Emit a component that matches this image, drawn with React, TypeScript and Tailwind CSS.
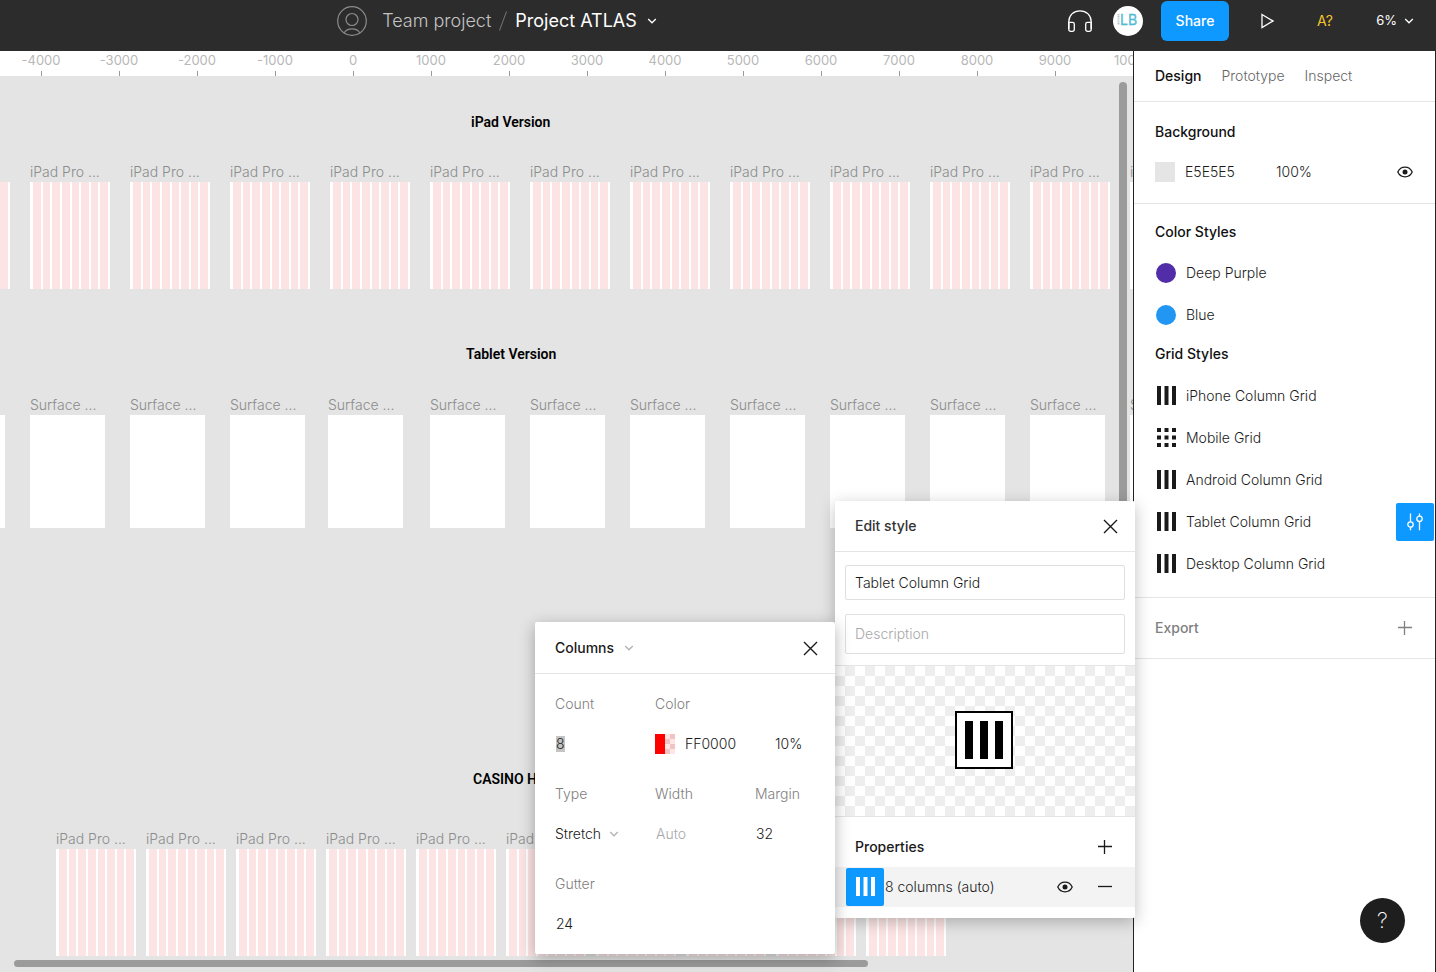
import { useState } from "react";
import type { ReactNode } from "react";

const RULER = [-4000, -3000, -2000, -1000, 0, 1000, 2000, 3000, 4000, 5000, 6000, 7000, 8000, 9000, 10000];

const IPAD_FRAMES = [-70, 30, 130, 230, 330, 430, 530, 630, 730, 830, 930, 1030, 1130];
const SURFACE_FRAMES = [-70, 30, 130, 230, 328, 430, 530, 630, 730, 830, 930, 1030, 1130];
const CASINO_FRAMES = [56, 146, 236, 326, 416, 506];
const CASINO_UNNAMED_FRAMES = [596, 686, 776, 866];

const COLOR_STYLES = [
  { name: "Deep Purple", swatch: "bg-[#512da8]" },
  { name: "Blue", swatch: "bg-[#2196f3]" },
];

const GRID_STYLES = [
  { name: "iPhone Column Grid", kind: "columns" },
  { name: "Mobile Grid", kind: "dots" },
  { name: "Android Column Grid", kind: "columns" },
  { name: "Tablet Column Grid", kind: "columns", active: true },
  { name: "Desktop Column Grid", kind: "columns" },
];

/* Icons */

function ChevronIcon({ className }: { className?: string }) {
  return (
    <svg className={className} width="10" height="6" viewBox="0 0 10 6" fill="none" stroke="currentColor" strokeWidth="1.3">
      <path d="M1.200 1l3.800 3.800L8.800 1" />
    </svg>
  );
}

function CloseIcon() {
  return (
    <svg width="16" height="16" viewBox="0 0 16 16" fill="none" stroke="currentColor" strokeWidth="1.4">
      <path d="M2 2l13 13M15 2l-13 13" />
    </svg>
  );
}

function PlusIcon() {
  return (
    <svg width="14" height="14" viewBox="0 0 14 14" stroke="currentColor" strokeWidth="1.3">
      <path d="M0 6.500h14M6.500 0v14" />
    </svg>
  );
}

function MinusIcon() {
  return (
    <svg width="14" height="14" viewBox="0 0 14 14" stroke="currentColor" strokeWidth="1.3">
      <path d="M0 6.500h14" />
    </svg>
  );
}

function EyeIcon() {
  return (
    <svg width="16" height="12" viewBox="0 0 16 12" fill="none" stroke="currentColor" strokeWidth="1.3">
      <path d="M.8 6C2.200 3 4.900 1.200 8 1.200S13.800 3 15.200 6C13.800 9 11.100 10.800 8 10.800S2.200 9 .8 6z" />
      <circle cx="8" cy="6" r="2.500" fill="currentColor" stroke="none" />
    </svg>
  );
}

function ColumnsIcon() {
  return (
    <svg width="20" height="20" viewBox="0 0 20 20" fill="currentColor">
      <path d="M1 0h4v19H1zM8.500 0h4v19h-4zM16 0h4v19h-4z" />
    </svg>
  );
}

function DotsIcon() {
  return (
    <svg width="20" height="20" viewBox="0 0 20 20" fill="currentColor">
      {[0, 7.5, 15].map((y) =>
        [1, 8.5, 16].map((x) => <rect key={`${x}-${y}`} x={x} y={y} width="4" height="4" />)
      )}
    </svg>
  );
}

function SlidersIcon() {
  return (
    <svg width="16" height="18" viewBox="0 0 16 18" fill="none" stroke="currentColor" strokeWidth="1.3">
      <path d="M3.500 .5v8.200M3.500 14.300v3M12.500 .5v2.500M12.500 8.600v8.700" />
      <circle cx="3.500" cy="11.500" r="2.700" />
      <circle cx="12.500" cy="5.800" r="2.700" />
    </svg>
  );
}

function UserIcon() {
  return (
    <svg width="30" height="30" viewBox="0 0 30 30" fill="none" stroke="#8c8c8c" strokeWidth="1.2">
      <circle cx="15" cy="15" r="14.300" />
      <circle cx="15" cy="13.500" r="6" />
      <path d="M7.200 26.800c1.400-2.600 4.300-4 7.800-4s6.400 1.400 7.800 4" />
    </svg>
  );
}

function HeadphonesIcon() {
  return (
    <svg width="24" height="22" viewBox="0 0 24 22" fill="none" stroke="#fff" strokeWidth="1.300">
      <path d="M.8 19V11.500C.8 5.500 5.500 .8 12 .8s11.200 4.700 11.200 10.700V19" />
      <path d="M.8 12.300H4.500a1.800 1.800 0 0 1 1.800 1.800v5.400a1.800 1.800 0 0 1-1.800 1.800H2.600a1.800 1.800 0 0 1-1.800-1.800z" />
      <path d="M23.200 12.300h-3.700a1.800 1.800 0 0 0-1.800 1.800v5.400a1.800 1.800 0 0 0 1.800 1.800h1.900a1.800 1.800 0 0 0 1.800-1.800z" />
    </svg>
  );
}

function Logo() {
  return (
    <svg width="30" height="30" viewBox="0 0 30 30">
      <circle cx="15" cy="15" r="15" fill="#fff" />
      <path d="M5.500 8v11" stroke="#b9c4c9" strokeWidth="2" strokeDasharray="1.200 .6" />
      <text x="7" y="19" fontSize="14" fontWeight="400" fontFamily="Inter, sans-serif" fill="#5cc4dc" stroke="#35abc9" strokeWidth=".3">
        LB
      </text>
    </svg>
  );
}

/* Canvas */

function Frame({ x, y, name, striped }: { x: number; y: number; name?: string; striped?: boolean }) {
  return (
    <div className="absolute flex flex-col" style={{ left: x, top: y }}>
      <span className="h-5 text-sm leading-5 font-light whitespace-nowrap text-[#8c8c8c]">{name}</span>
      {striped ? (
        <div className="flex h-[107px] w-20 gap-[2px] bg-white pr-[2px] pl-[3px]">
          {Array.from({ length: 8 }, (_, i) => (
            <div key={i} className="flex-1 bg-[#fde4e4]" />
          ))}
        </div>
      ) : (
        <div className="h-[113px] w-[75px] bg-white" />
      )}
    </div>
  );
}

function CanvasTitle({ x, y, children }: { x: number; y: number; children: ReactNode }) {
  return (
    <h2
      className="absolute font-[Roboto,sans-serif] text-sm leading-5 font-semibold whitespace-nowrap text-black"
      style={{ left: x, top: y }}
    >
      {children}
    </h2>
  );
}

function Canvas() {
  return (
    <main className="flex min-w-0 flex-1 flex-col overflow-hidden">
      <div className="flex h-[25px] shrink-0 bg-white pl-[2px]">
        {RULER.map((n) => (
          <div key={n} className="flex w-[78px] shrink-0 flex-col items-center justify-between">
            <span className="text-[13px] leading-[18px] text-[#b8b8b8]">{n}</span>
            <span className="h-[5px] w-px bg-[#999999]" />
          </div>
        ))}
      </div>
      <div className="relative flex-1 overflow-hidden bg-[#e4e4e4]">
        <CanvasTitle x={471} y={36}>iPad Version</CanvasTitle>
        {IPAD_FRAMES.map((x) => (
          <Frame key={x} x={x} y={86} name="iPad Pro ..." striped />
        ))}
        <CanvasTitle x={466} y={268}>Tablet Version</CanvasTitle>
        {SURFACE_FRAMES.map((x) => (
          <Frame key={x} x={x} y={319} name="Surface ..." />
        ))}
        <CanvasTitle x={473} y={693}>CASINO H</CanvasTitle>
        {CASINO_FRAMES.map((x) => (
          <Frame key={x} x={x} y={753} name="iPad Pro ..." striped />
        ))}
        {CASINO_UNNAMED_FRAMES.map((x) => (
          <Frame key={x} x={x} y={753} striped />
        ))}
        {/* Scrollbars */}
        <div className="absolute top-[6px] right-[6px] h-[640px] w-2 rounded-full bg-[#9b9b9b]" />
        <div className="absolute bottom-[5px] left-[14px] h-[7px] w-[854px] rounded-full bg-[#9b9b9b]" />
      </div>
    </main>
  );
}

/* Header */

function Header() {
  return (
    <header className="flex h-[51px] shrink-0 items-center bg-[#2c2c2c] pb-[9px] text-white">
      <div className="flex flex-1 items-center justify-center">
        <UserIcon />
        <a href="#team" className="ml-[15px] text-lg leading-6 font-light text-[#c4c4c4]">Team project</a>
        <svg className="mx-2" width="8" height="20" viewBox="0 0 8 20" stroke="#777">
          <path d="M7.500 .5l-7 19" />
        </svg>
        <button className="flex items-center gap-[10px] text-lg leading-6">
          Project ATLAS
          <ChevronIcon />
        </button>
      </div>
      <div className="flex shrink-0 items-center pl-[62px]">
        <button aria-label="Audio" className="flex w-12 justify-center">
          <HeadphonesIcon />
        </button>
        <button aria-label="Profile" className="flex w-12 justify-center">
          <Logo />
        </button>
        <button className="ml-[9px] h-10 w-[68px] rounded-md bg-[#0d99ff] text-sm font-medium">Share</button>
        <button aria-label="Present" className="flex w-[76px] justify-center">
          <svg width="13" height="16" viewBox="0 0 13 16" fill="none" stroke="#fff" strokeWidth="1.300">
            <path d="M1 1.500l11 6.500-11 6.500z" />
          </svg>
        </button>
        <button className="w-10 text-sm text-[#f2c52e]">A?</button>
        <button className="flex w-[91px] items-center justify-end gap-[7px] pr-[22px] text-[13px]">
          6%
          <ChevronIcon />
        </button>
      </div>
    </header>
  );
}

/* Right sidebar */

function Sidebar() {
  return (
    <aside className="relative flex w-[303px] shrink-0 flex-col border-x border-[#222222] bg-white text-sm font-light text-[#1a1a1a]">
      <nav className="flex h-[51px] items-center gap-5 border-b border-[#e5e5e5] pl-[21px] text-[#666666]">
        <button className="font-medium text-[#111111]">Design</button>
        <button>Prototype</button>
        <button>Inspect</button>
      </nav>

      <section className="border-b border-[#e5e5e5] pt-[10px] pr-[22px] pb-[11px] pl-[21px]">
        <h2 className="flex h-10 items-center font-medium text-[#111111]">Background</h2>
        <div className="flex h-10 items-center">
          <span className="h-5 w-5 bg-[#e5e5e5]" />
          <input aria-label="Background color" defaultValue="E5E5E5" className="ml-[10px] w-[91px] outline-none" />
          <input aria-label="Background opacity" defaultValue="100%" className="w-12 outline-none" />
          <button aria-label="Toggle background" className="ml-auto text-[#1a1a1a]">
            <EyeIcon />
          </button>
        </div>
      </section>

      <section className="border-b border-[#e5e5e5] pt-2 pb-3 pl-[21px]">
        <h2 className="flex h-10 items-center font-medium text-[#111111]">Color Styles</h2>
        <ul>
          {COLOR_STYLES.map((c) => (
            <li key={c.name} className="flex h-[42px] items-center gap-[10px] pl-px">
              <span className={`h-5 w-5 rounded-full ${c.swatch}`} />
              {c.name}
            </li>
          ))}
        </ul>
        <h2 className="mb-[3px] flex h-9 items-center font-medium text-[#111111]">Grid Styles</h2>
        <ul>
          {GRID_STYLES.map((g) => (
            <li key={g.name} className="flex h-[42px] items-center gap-[10px] pr-px pl-px">
              {g.kind === "dots" ? <DotsIcon /> : <ColumnsIcon />}
              {g.name}
              {g.active && (
                <button aria-label="Edit style" className="ml-auto flex h-[38px] w-[38px] items-center justify-center rounded-[2px] bg-[#0d99ff] text-white">
                  <SlidersIcon />
                </button>
              )}
            </li>
          ))}
        </ul>
      </section>

      <section className="flex h-[61px] items-center justify-between border-b border-[#e5e5e5] pr-[23px] pl-[21px] text-[#808080]">
        <h2 className="font-medium">Export</h2>
        <button aria-label="Add export">
          <PlusIcon />
        </button>
      </section>

      <button
        aria-label="Help"
        className="absolute right-[30px] bottom-[29px] h-[45px] w-[45px] rounded-full bg-[#1e1e1e] text-[22px] font-extralight text-white"
      >
        ?
      </button>
    </aside>
  );
}

/* Floating panels */

function EditStylePanel({ onClose }: { onClose: () => void }) {
  return (
    <div className="absolute top-[450px] right-[301px] w-[300px] rounded-[2px] bg-white pb-[11px] text-sm font-light text-[#1a1a1a] shadow-[0_4px_16px_rgba(0,0,0,0.25)]">
      <div className="flex h-[51px] items-center justify-between border-b border-[#e5e5e5] pr-[17px] pl-5">
        <h2 className="font-medium text-[#333333]">Edit style</h2>
        <button aria-label="Close" onClick={onClose}>
          <CloseIcon />
        </button>
      </div>
      <div className="flex flex-col gap-[14px] px-[10px] pt-[13px] pb-[11px]">
        <input
          aria-label="Style name"
          defaultValue="Tablet Column Grid"
          className="h-[35px] rounded-[2px] border border-[#e0e0e0] px-[9px] outline-none"
        />
        <textarea
          aria-label="Description"
          placeholder="Description"
          rows={1}
          className="h-10 resize-none rounded-[2px] border border-[#e0e0e0] px-[9px] py-[9px] leading-5 outline-none placeholder:text-[#a8a8a8]"
        />
      </div>
      <div className="flex h-[152px] items-center justify-center border-y border-[#e5e5e5] bg-[repeating-conic-gradient(#eeeeee_0_25%,#ffffff_0_50%)] bg-[length:20px_20px] pr-[2px] pb-[2px]">
        <svg width="58" height="58" viewBox="0 0 58 58">
          <rect x="1" y="1" width="56" height="56" fill="#fff" stroke="#000" strokeWidth="2" />
          <path d="M10 10h8v38h-8zM25 10h8v38h-8zM40 10h8v38h-8z" />
        </svg>
      </div>
      <div className="flex h-[50px] items-center justify-between pt-[10px] pr-[23px] pl-5">
        <h2 className="font-medium">Properties</h2>
        <button aria-label="Add property">
          <PlusIcon />
        </button>
      </div>
      <div className="flex h-10 items-center bg-[#f3f3f3] pr-[23px] pl-[11px]">
        <button aria-label="Grid settings" className="flex h-[38px] w-[38px] items-center justify-center rounded-[2px] bg-[#0d99ff] text-white">
          <ColumnsIcon />
        </button>
        <span className="ml-px">8 columns (auto)</span>
        <button aria-label="Toggle grid" className="ml-auto">
          <EyeIcon />
        </button>
        <button aria-label="Remove grid" className="ml-[25px]">
          <MinusIcon />
        </button>
      </div>
    </div>
  );
}

function Field({ label, id, children }: { label: string; id: string; children: ReactNode }) {
  return (
    <div>
      <label htmlFor={id} className="flex h-10 items-center text-[#808080]">{label}</label>
      <div className="flex h-10 items-center">{children}</div>
    </div>
  );
}

function ColumnsPanel({ onClose }: { onClose: () => void }) {
  return (
    <div className="absolute top-[571px] right-[601px] w-[300px] rounded-[2px] bg-white text-sm font-light text-[#1a1a1a] shadow-[0_4px_16px_rgba(0,0,0,0.3)]">
      <div className="flex h-[52px] items-center border-b border-[#e5e5e5] pr-[17px] pl-5">
        <select aria-label="Layout grid" className="appearance-none font-medium outline-none">
          <option>Columns</option>
        </select>
        <ChevronIcon className="ml-[9px] text-[#b3b3b3]" />
        <button aria-label="Close" className="ml-auto" onClick={onClose}>
          <CloseIcon />
        </button>
      </div>
      <div className="grid grid-cols-[100px_100px_1fr] gap-y-[10px] py-[10px] pl-5">
        <Field label="Count" id="count">
          <input id="count" defaultValue="8" className="ml-px w-[9px] bg-[#c4c4c4] leading-4 outline-none" />
        </Field>
        <div className="col-span-2">
          <Field label="Color" id="color">
            <span className="flex h-5 w-5">
              <span className="w-[10px] bg-[#ff0000]" />
              <span className="w-[10px] bg-[repeating-conic-gradient(#f0c4c4_0_25%,#fde6e6_0_50%)] bg-[length:10px_10px]" />
            </span>
            <input id="color" defaultValue="FF0000" className="ml-[10px] w-[90px] outline-none" />
            <input aria-label="Opacity" defaultValue="10%" className="w-10 outline-none" />
          </Field>
        </div>
        <Field label="Type" id="type">
          <select id="type" className="appearance-none outline-none">
            <option>Stretch</option>
          </select>
          <ChevronIcon className="ml-[7px] text-[#b3b3b3]" />
        </Field>
        <Field label="Width" id="width">
          <input id="width" placeholder="Auto" className="w-20 pl-px outline-none placeholder:text-[#a8a8a8]" />
        </Field>
        <Field label="Margin" id="margin">
          <input id="margin" defaultValue="32" className="w-15 pl-px outline-none" />
        </Field>
        <Field label="Gutter" id="gutter">
          <input id="gutter" defaultValue="24" className="w-20 pl-px outline-none" />
        </Field>
      </div>
    </div>
  );
}

export default function App() {
  const [showStyle, setShowStyle] = useState(true);
  const [showColumns, setShowColumns] = useState(true);

  return (
    <div className="flex h-screen flex-col overflow-hidden bg-white font-[Inter,sans-serif]">
      <Header />
      <div className="relative flex min-h-0 flex-1">
        <Canvas />
        <Sidebar />
        {showStyle && <EditStylePanel onClose={() => setShowStyle(false)} />}
        {showColumns && <ColumnsPanel onClose={() => setShowColumns(false)} />}
      </div>
    </div>
  );
}
